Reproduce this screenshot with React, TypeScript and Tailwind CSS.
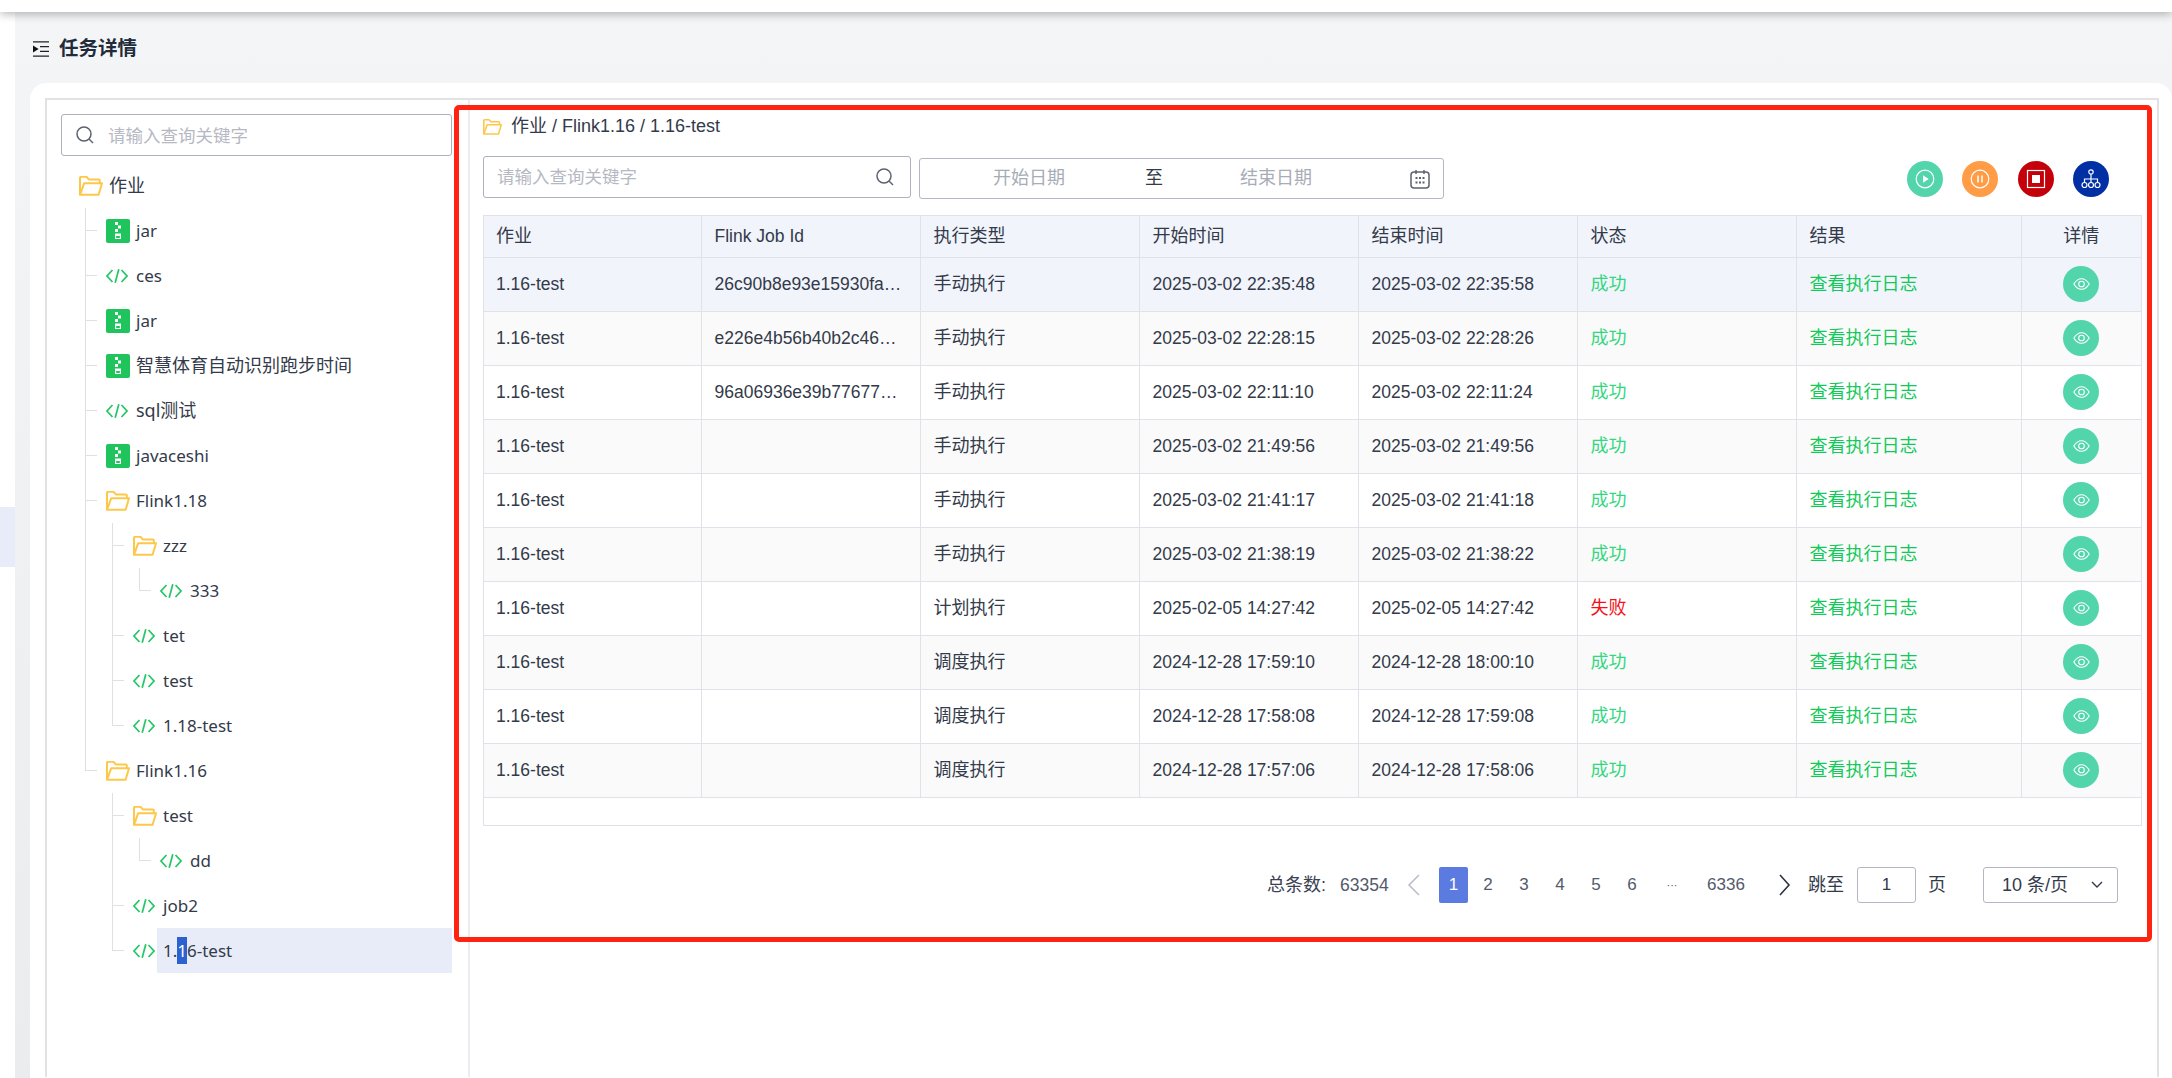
type TreeIcon = "folder" | "jar" | "code";
type Branch = "tee" | "end";

type TreeRow = {
	label: string;
	icon: TreeIcon;
	guides?: boolean[];
	branch?: Branch;
	selected?: boolean;
};

type JobRow = {
	jobId: string;
	kind: string;
	start: string;
	end: string;
	ok: boolean;
};

const treeRows: TreeRow[] = [
	{ label: "作业", icon: "folder" },
	{ label: "jar", icon: "jar", branch: "tee" },
	{ label: "ces", icon: "code", branch: "tee" },
	{ label: "jar", icon: "jar", branch: "tee" },
	{ label: "智慧体育自动识别跑步时间", icon: "jar", branch: "tee" },
	{ label: "sql测试", icon: "code", branch: "tee" },
	{ label: "javaceshi", icon: "jar", branch: "tee" },
	{ label: "Flink1.18", icon: "folder", branch: "tee" },
	{ label: "zzz", icon: "folder", guides: [true], branch: "tee" },
	{ label: "333", icon: "code", guides: [true, true], branch: "end" },
	{ label: "tet", icon: "code", guides: [true], branch: "tee" },
	{ label: "test", icon: "code", guides: [true], branch: "tee" },
	{ label: "1.18-test", icon: "code", guides: [true], branch: "end" },
	{ label: "Flink1.16", icon: "folder", branch: "end" },
	{ label: "test", icon: "folder", guides: [false], branch: "tee" },
	{ label: "dd", icon: "code", guides: [false, true], branch: "end" },
	{ label: "job2", icon: "code", guides: [false], branch: "tee" },
	{ label: "1.16-test", icon: "code", guides: [false], branch: "end", selected: true },
];

const jobRows: JobRow[] = [
	{ jobId: "26c90b8e93e15930fa4b1c7d2e", kind: "手动执行", start: "2025-03-02 22:35:48", end: "2025-03-02 22:35:58", ok: true },
	{ jobId: "e226e4b56b40b2c46a91d07f3c", kind: "手动执行", start: "2025-03-02 22:28:15", end: "2025-03-02 22:28:26", ok: true },
	{ jobId: "96a06936e39b77677c20fe8b14", kind: "手动执行", start: "2025-03-02 22:11:10", end: "2025-03-02 22:11:24", ok: true },
	{ jobId: "", kind: "手动执行", start: "2025-03-02 21:49:56", end: "2025-03-02 21:49:56", ok: true },
	{ jobId: "", kind: "手动执行", start: "2025-03-02 21:41:17", end: "2025-03-02 21:41:18", ok: true },
	{ jobId: "", kind: "手动执行", start: "2025-03-02 21:38:19", end: "2025-03-02 21:38:22", ok: true },
	{ jobId: "", kind: "计划执行", start: "2025-02-05 14:27:42", end: "2025-02-05 14:27:42", ok: false },
	{ jobId: "", kind: "调度执行", start: "2024-12-28 17:59:10", end: "2024-12-28 18:00:10", ok: true },
	{ jobId: "", kind: "调度执行", start: "2024-12-28 17:58:08", end: "2024-12-28 17:59:08", ok: true },
	{ jobId: "", kind: "调度执行", start: "2024-12-28 17:57:06", end: "2024-12-28 17:58:06", ok: true },
];

const headers = ["作业", "Flink Job Id", "执行类型", "开始时间", "结束时间", "状态", "结果"];

const hasCjk = (text: string) => /[\u4e00-\u9fff]/.test(text);

function FolderIcon({ className }: { className: string }) {
	return (
		<svg className={className} viewBox="0 0 24 20" fill="none" stroke="#fdc84a" strokeWidth="2" strokeLinejoin="round">
			<path d="M1 18.8V1.8a1 1 0 0 1 1-1h5.6l2.2 2.6h10a1 1 0 0 1 1 1V7" />
			<path d="M1 18.8h18.6L23 7.2H5.2Z" />
		</svg>
	);
}

function JarIcon() {
	return (
		<svg className="h-6 w-6 shrink-0" viewBox="0 0 24 24">
			<rect width="24" height="24" rx="2" fill="#1fc45c" />
			<rect x="9" y="3" width="3" height="3" fill="#fff" />
			<rect x="12" y="6.5" width="3" height="3" fill="#fff" />
			<rect x="9" y="10" width="3" height="3" fill="#fff" />
			<rect x="9" y="14.5" width="6" height="5.5" fill="#fff" />
			<rect x="10.2" y="17" width="3.6" height="2" fill="#1fc45c" />
		</svg>
	);
}

function CodeIcon() {
	return (
		<span className="flex h-6 w-6 shrink-0 items-center">
			<svg className="h-[14px] w-[22px]" viewBox="0 0 22 14" fill="none" stroke="#26c565" strokeWidth="1.7">
				<path d="M6.5 1 1 7l5.5 6" />
				<path d="m15.5 1 5.5 6-5.5 6" />
				<path d="M12.8.2 9.2 13.8" />
			</svg>
		</span>
	);
}

function SearchIcon() {
	return (
		<svg className="h-[18px] w-[18px] shrink-0" viewBox="0 0 18 18" fill="none" stroke="#5d6270" strokeWidth="1.5">
			<circle cx="8" cy="8" r="7" />
			<path d="m13 13 4 4" />
		</svg>
	);
}

function CalendarIcon() {
	return (
		<svg className="h-5 w-5" viewBox="0 0 20 20" fill="none" stroke="#5d6270" strokeWidth="1.5">
			<rect x="1" y="3" width="18" height="16" rx="3" />
			<path d="M6 1v4M14 1v4" />
			<path d="M5.5 9h2M9 9h2M12.5 9h2M5.5 13.5h2M9 13.5h2M12.5 13.5h2" strokeWidth="2" />
		</svg>
	);
}

function TitleIcon() {
	return (
		<svg className="h-4 w-4" viewBox="0 0 16 16" fill="none" stroke="#222" strokeWidth="1.3">
			<path d="M0 .8h16M7 5.6h9M7 10.4h9M0 15.2h16" />
			<path d="M0 4.5 5.6 8 0 11.5Z" fill="#111" stroke="none" />
		</svg>
	);
}

function RoundButton({ color, children }: { color: string; children: React.ReactNode }) {
	return (
		<span className={`flex h-9 w-9 items-center justify-center rounded-full ${color}`}>
			<svg className="h-5 w-5" viewBox="0 0 20 20" fill="none" stroke="#fff" strokeWidth="1.2">
				{children}
			</svg>
		</span>
	);
}

function EyeButton() {
	return (
		<span className="mx-auto flex h-9 w-9 items-center justify-center rounded-full bg-[#53d5ab]">
			<svg className="h-[12px] w-[17px]" viewBox="0 0 17 12" fill="none" stroke="#fff" strokeWidth="1.1">
				<path d="M.8 6C3 2.4 5.6.7 8.5.7S14 2.4 16.2 6c-2.2 3.6-4.8 5.3-7.7 5.3S3 9.6.8 6Z" />
				<circle cx="8.5" cy="6" r="2.8" />
			</svg>
		</span>
	);
}

function TreeItem({ row }: { row: TreeRow }) {
	return (
		<div className={`flex h-[45px] items-stretch ${row.branch ? "pl-6" : "pl-[18px]"}`}>
			{row.guides?.map((on, i) => (
				<span key={i} className={`w-[27px] shrink-0 ${on ? "border-l border-[#dfe0e6]" : ""}`} />
			))}
			{row.branch && (
				<span className="flex w-[21px] shrink-0 flex-col">
					<span className="h-1/2 w-3 border-b border-l border-[#dfe0e6]" />
					{row.branch === "tee" && <span className="h-1/2 border-l border-[#dfe0e6]" />}
				</span>
			)}
			<span className="flex items-center">
				{row.icon === "folder" && <FolderIcon className="h-5 w-6 shrink-0" />}
				{row.icon === "jar" && <JarIcon />}
				{row.icon === "code" && <CodeIcon />}
			</span>
			<span
				className={`flex flex-1 items-center pl-[6px] ${hasCjk(row.label) ? "text-[18px]" : "text-[17px]"} ${row.selected ? "bg-[#e8ecf8]" : ""}`}
			>
				{row.selected ? (
					<span className="whitespace-pre">
						1.<span className="inline-block h-[27px] bg-[#2b62d0] leading-[27px] text-white">1</span>6-test
					</span>
				) : (
					row.label
				)}
			</span>
		</div>
	);
}

function Pagination() {
	return (
		<div className="mt-[41px] flex h-9 items-center justify-end pr-6 text-[17px] text-[#525a6b]">
			<span className="flex w-[135px] items-center">
				<span className="w-[73px] text-[18px] text-[#3a4152]">总条数:</span>
				<span className="text-[17.5px]">63354</span>
			</span>
			<svg className="mr-[13px] h-[22px] w-[24px]" viewBox="0 0 24 22" fill="none" stroke="#b8bcc6" strokeWidth="1.5">
				<path d="M17 1 7 11l10 10" />
			</svg>
			<span className="mr-[2px] flex h-9 w-[29px] items-center justify-center rounded-[2px] bg-[#5b7be0] text-white">1</span>
			{["2", "3", "4", "5", "6"].map((page) => (
				<span key={page} className="w-9 text-center">
					{page}
				</span>
			))}
			<span className="w-11 text-center text-[11px]">···</span>
			<span className="w-16 text-center">6336</span>
			<span className="flex w-[42px] justify-center pl-[10px]">
				<svg className="h-[22px] w-[14px]" viewBox="0 0 14 22" fill="none" stroke="#2c3342" strokeWidth="1.6">
					<path d="m3 1 9 10-9 10" />
				</svg>
			</span>
			<span className="ml-2 w-[49px] text-[18px] text-[#333a4a]">跳至</span>
			<span className="flex h-9 w-[59px] items-center justify-center rounded-[3px] border border-[#b4b6c2] text-[#333a4a]">1</span>
			<span className="ml-3 w-[55px] text-[18px] text-[#333a4a]">页</span>
			<span className="flex h-9 w-[135px] items-center rounded-[3px] border border-[#b4b6c2] pl-[18px] text-[18px] text-[#333a4a]">
				<span className="w-[89px]">10 条/页</span>
				<svg className="h-2 w-3" viewBox="0 0 12 8" fill="none" stroke="#333a4a" strokeWidth="1.4">
					<path d="m1 1 5 5 5-5" />
				</svg>
			</span>
		</div>
	);
}

export default function App() {
	return (
		<div className="relative flex h-[1078px] w-[2172px] flex-col overflow-hidden bg-white font-['Liberation_Sans','Noto_Sans_CJK_SC',sans-serif] text-[17.5px] text-[#333a4a]">
			<div className="relative z-10 h-3 shrink-0 bg-white shadow-[0_2px_10px_rgba(0,0,0,0.3)]" />

			<div className="flex min-h-0 flex-1">
				<aside className="w-[15px] shrink-0 bg-white pt-[495px]">
					<div className="h-[60px] bg-[#e8ecf8]" />
				</aside>

				<main className="flex min-w-0 flex-1 flex-col bg-gradient-to-b from-[#f4f5f7] to-[#ebecee]">
					<header className="flex h-[71px] shrink-0 items-center gap-[10px] pl-[18px] pt-[2px]">
						<TitleIcon />
						<h1 className="text-[19.5px] font-bold text-[#222b3a]">任务详情</h1>
					</header>

					<div className="ml-[15px] flex min-h-0 flex-1 flex-col rounded-t-[16px] bg-white pb-px pl-[15px] pr-[13px] pt-[15px]">
						<div className="flex min-h-0 flex-1 border-x-2 border-t-2 border-[#e2e2e4]">
							{/* Tree column */}
							<section className="w-[423px] shrink-0 border-r-2 border-[#ebebf2] pl-[14px] pr-[16px] pt-[14px] font-['Noto_Sans','Noto_Sans_CJK_SC',sans-serif]">
								<label className="flex h-[42px] items-center gap-[14px] rounded-[3px] border border-[#aeb0bd] pl-[14px] text-[#b6b8c4]">
									<SearchIcon />
									<span>请输入查询关键字</span>
								</label>
								<div className="mt-[7px]">
									{treeRows.map((row, i) => (
										<TreeItem key={i} row={row} />
									))}
								</div>
							</section>

							{/* Job history */}
							<section className="min-w-0 flex-1 pl-[13px] pr-[15px] pt-[14px]">
								<div className="flex h-6 items-center gap-[9px] pt-[1px] text-[18px]">
									<FolderIcon className="h-4 w-[19px]" />
									<span>作业 / Flink1.16 / 1.16-test</span>
								</div>

								<div className="mt-[18px] flex h-[43px] items-start">
									<label className="flex h-[42px] w-[428px] items-center justify-between rounded-[3px] border border-[#aeb0bd] pl-[13px] pr-[16px] text-[#b6b8c4]">
										<span>请输入查询关键字</span>
										<SearchIcon />
									</label>
									<div className="ml-2 mt-[2px] flex h-[41px] w-[525px] items-center rounded-[3px] border border-[#b4b6c2] pl-[73px] text-[18px] text-[#a8acb6]">
										<span className="w-[72px]">开始日期</span>
										<span className="ml-20 w-[18px] text-[#333a4a]">至</span>
										<span className="ml-[77px] w-[72px]">结束日期</span>
										<span className="ml-[98px]">
											<CalendarIcon />
										</span>
									</div>
									<div className="ml-auto mr-[33px] mt-[5px] flex gap-[19.5px]">
										<RoundButton color="bg-[#53d5ab]">
											<circle cx="10" cy="10" r="8.8" />
											<path d="M8 6.2v7.6l5.6-3.8Z" fill="#fff" stroke="none" />
										</RoundButton>
										<RoundButton color="bg-[#ff9c45]">
											<circle cx="10" cy="10" r="8.8" />
											<path d="M8 6.5v7M12 6.5v7" strokeWidth="1.5" />
										</RoundButton>
										<RoundButton color="bg-[#c4000b]">
											<rect x="1.5" y="1.5" width="17" height="17" />
											<rect x="6" y="6" width="8" height="8" fill="#fff" stroke="none" />
										</RoundButton>
										<RoundButton color="bg-[#0030a4]">
											<circle cx="10" cy="3" r="2.2" />
											<path d="M10 5.2V10M3.5 13.5V10h13v3.5M10 10v3.5" />
											<circle cx="3.5" cy="16" r="2.5" />
											<circle cx="10" cy="16" r="2.5" />
											<circle cx="16.5" cy="16" r="2.5" />
										</RoundButton>
									</div>
								</div>

								<div className="mt-4 h-[611px] border border-[#e0e2ea]">
									<table className="w-full table-fixed border-collapse">
										<colgroup>
											<col className="w-[217px]" />
											<col className="w-[219px]" />
											<col className="w-[219px]" />
											<col className="w-[219px]" />
											<col className="w-[219px]" />
											<col className="w-[219px]" />
											<col className="w-[225px]" />
											<col />
										</colgroup>
										<thead>
											<tr className="h-[41px] bg-[#f1f4fb]">
												{headers.map((h, i) => (
													<th
														key={h}
														className={`border-b border-r border-[#e0e2ea] pr-[13px] text-left font-normal ${i === 0 ? "pl-3" : "pl-[13px]"} ${hasCjk(h) ? "text-[18px]" : ""}`}
													>
														{h}
													</th>
												))}
												<th className="border-b border-[#e0e2ea] text-center text-[18px] font-normal">详情</th>
											</tr>
										</thead>
										<tbody>
											{jobRows.map((row, i) => (
												<tr key={row.start} className={`h-[54px] ${i === 0 ? "bg-[#f1f4fb]" : i % 2 === 1 ? "bg-[#fafafa]" : "bg-white"}`}>
													<td className="border-b border-r border-[#e0e2ea] pl-3 pr-[13px]">1.16-test</td>
													<td className="truncate border-b border-r border-[#e0e2ea] pl-[13px] pr-[16px]">{row.jobId}</td>
													<td className="border-b border-r border-[#e0e2ea] px-[13px] text-[18px]">{row.kind}</td>
													<td className="border-b border-r border-[#e0e2ea] px-[13px]">{row.start}</td>
													<td className="border-b border-r border-[#e0e2ea] px-[13px]">{row.end}</td>
													<td className={`border-b border-r border-[#e0e2ea] px-[13px] text-[18px] ${row.ok ? "text-[#34d77f]" : "text-[#f5101a]"}`}>
														{row.ok ? "成功" : "失败"}
													</td>
													<td className="border-b border-r border-[#e0e2ea] px-[13px] text-[18px] text-[#12c95a]">查看执行日志</td>
													<td className="border-b border-[#e0e2ea]">
														<EyeButton />
													</td>
												</tr>
											))}
										</tbody>
									</table>
								</div>

								<Pagination />
							</section>
						</div>
					</div>
				</main>
			</div>

			{/* annotation drawn over the screenshot */}
			<div className="pointer-events-none absolute left-[454px] top-[105px] z-20 h-[837px] w-[1698px] rounded-[5px] border-[5px] border-[#ff2412]" />
		</div>
	);
}
